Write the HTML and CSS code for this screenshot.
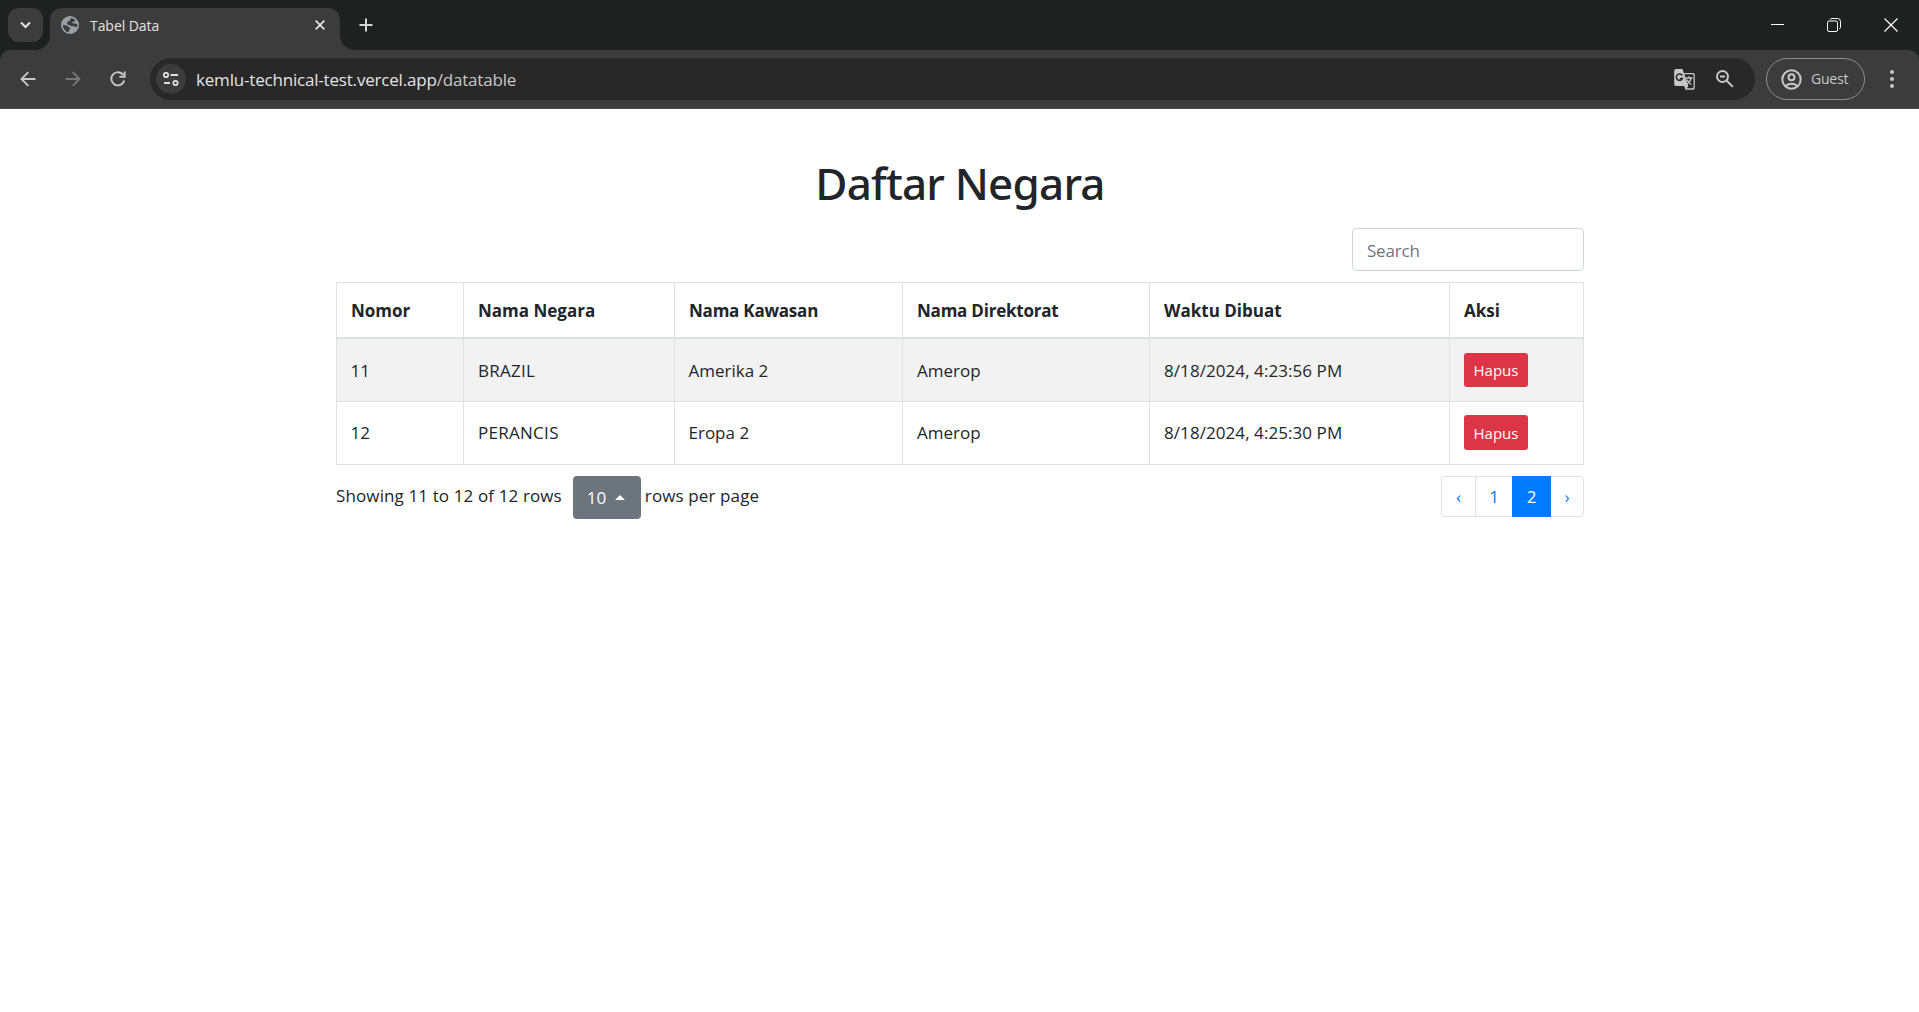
FILE: index.html
```html
<!DOCTYPE html>
<html lang="id">
<head>
<meta charset="utf-8">
<title>Tabel Data</title>
<link rel="stylesheet" href="styles.css">
</head>
<body>
<header class="browser">
  <div class="tabstrip">
    <button class="tab-search" aria-label="Search tabs"><svg width="35" height="34" fill="none" stroke="#e3e3e3" stroke-width="2"><path d="M13 14.500l4.500 4.500 4.500-4.500"/></svg></button>
    <div class="tab">
      <svg class="globe" width="18" height="18" viewBox="0 0 18 18"><circle cx="9" cy="9" r="9" fill="#9aa0a6"/><path d="M10.800 1.900C12 2.300 13.800 3.500 14.600 4.700 13.500 5 13 5.900 11.700 5.800 10.800 6 11 7 12 7.300c1.200.4 3 .2 4.300.9.100 1.200 0 2-.3 2.800-1.800.2-3-.9-4.600-.7C9.800 10.500 9 9 7.200 8.800 6 8.500 5.700 7.600 6.200 6.300 6.700 5 8.500 5.500 9 4.200 9.200 3.200 9.700 2.200 10.800 1.900zM1.800 8.500C3.500 9.800 5 9 6.500 9.900c1.200.7 1 1.600 2.600 1.900.5 1.200-.6 1.700-1.100 2.500-.3.700.1 1.300-.2 2C4.300 15.800 1.800 12.500 1.800 8.500z" fill="#3c3c3c"/></svg>
      <span class="tab-title">Tabel Data</span>
      <svg class="tab-close" width="10" height="10" stroke="#e3e3e3" stroke-width="1.800"><path d="M.7.7l8.600 8.600M9.300.7L.7 9.300"/></svg>
    </div>
    <svg class="new-tab" width="14" height="14" stroke="#d5d5d5" stroke-width="2"><path d="M7 .5v13M.5 7h13"/></svg>
    <div class="window-controls">
      <svg width="13" height="13" stroke="#fff"><path d="M0 6.500h13"/></svg>
      <svg width="14" height="14" fill="none" stroke="#fff"><rect x=".5" y="3" width="10" height="10.500" rx="1.500"/><path d="M3 1.600Q3.500.5 5 .5h5.500q3 0 3 3V9q0 1.500-1.200 2"/></svg>
      <svg width="14" height="14" stroke="#fff" stroke-width="1.200"><path d="M.5.5l13 13M13.500.5l-13 13"/></svg>
    </div>
  </div>
  <div class="toolbar">
    <nav class="nav-icons">
      <svg width="16" height="16" fill="none" stroke="#c7c7c7" stroke-width="1.900"><path d="M15.500 8H1.800M8.300 1.200L1.500 8l6.800 6.800"/></svg>
      <svg width="16" height="16" fill="none" stroke="#777" stroke-width="1.900"><path d="M.5 8h13.700M7.700 1.200L14.500 8l-6.800 6.800"/></svg>
      <svg width="16" height="16" fill="none" stroke="#c7c7c7" stroke-width="1.900"><path d="M13.300 3.900A6.600 6.600 0 1 0 14.300 9.600M14.700.5v5.300H9.400"/></svg>
    </nav>
    <div class="omnibox">
      <span class="site-info"><svg width="16" height="14" fill="none" stroke="#dedede" stroke-width="1.800"><circle cx="3" cy="3" r="2.200"/><path d="M7.500 3H15M1 11h6"/><circle cx="12.500" cy="11" r="2.200"/></svg></span>
      <span class="url">kemlu-technical-test.vercel.app<span class="path">/datatable</span></span>
      <svg class="translate" width="21" height="21" viewBox="0 0 21 21"><path d="M2 0h6.500l1.300 4H19a1.800 1.800 0 0 1 1.800 1.800v13A1.800 1.800 0 0 1 19 20.700h-7.500L10.200 17H2a1.800 1.800 0 0 1-1.800-1.800V1.800A1.800 1.800 0 0 1 2 0z" fill="#c7c7c7"/><path d="M10.300 5.300H18.500q1 0 1 1v12q0 1-1 1h-5.700l1.500-2.200z" fill="#282828"/><path d="M8.300 6.500A3.200 3.200 0 1 0 8.500 9.400H5.800" fill="none" stroke="#282828" stroke-width="1.500"/><path d="M11.500 9h7M15 7.300V9M17.300 9q-.8 3.500-4.500 6M12.800 10.500q1.500 3.200 4.500 5" fill="none" stroke="#c7c7c7" stroke-width="1.300"/></svg>
      <svg class="zoom" width="18" height="18" fill="none" stroke="#c7c7c7" stroke-width="2"><circle cx="6.500" cy="6.500" r="5.500"/><path d="M10.700 10.700l6.200 6.200M4 6.500h5"/></svg>
    </div>
    <button class="guest"><svg width="21" height="21" fill="none" stroke="#c7c7c7" stroke-width="2"><circle cx="10.500" cy="10.500" r="9.200"/><circle cx="10.500" cy="8.300" r="3"/><path d="M4.500 17q6-4.500 12 0"/></svg><span>Guest</span></button>
    <svg class="menu" width="4" height="18" fill="#c7c7c7"><circle cx="2" cy="2" r="2"/><circle cx="2" cy="9" r="2"/><circle cx="2" cy="16" r="2"/></svg>
  </div>
</header>
<main class="container">
  <h1>Daftar Negara</h1>
  <div class="search-row"><input class="search" type="search" placeholder="Search"></div>
  <table class="countries">
    <colgroup><col class="c-no"><col class="c-country"><col class="c-region"><col class="c-dir"><col class="c-time"><col class="c-action"></colgroup>
    <thead><tr><th>Nomor</th><th>Nama Negara</th><th class="tight">Nama Kawasan</th><th class="tight">Nama Direktorat</th><th>Waktu Dibuat</th><th>Aksi</th></tr></thead>
    <tbody>
      <tr><td>11</td><td class="caps">BRAZIL</td><td>Amerika 2</td><td>Amerop</td><td class="time">8/18/2024, 4:23:56 PM</td><td><button class="delete">Hapus</button></td></tr>
      <tr><td>12</td><td class="caps">PERANCIS</td><td>Eropa 2</td><td>Amerop</td><td class="time">8/18/2024, 4:25:30 PM</td><td><button class="delete">Hapus</button></td></tr>
    </tbody>
  </table>
  <footer class="table-footer">
    <span class="info">Showing 11 to 12 of 12 rows</span>
    <button class="page-size">10<i class="caret"></i></button>
    <span class="info">rows per page</span>
    <nav class="pagination"><a class="prev">‹</a><a class="one">1</a><a class="active">2</a><a class="next">›</a></nav>
  </footer>
</main>
</body>
</html>
```
FILE: styles.css
```css
* { box-sizing: border-box; }
body { margin: 0; background: #fff; color: #212529; font: 17px/26px "Open Sans", "Noto Sans", sans-serif; }
button { border: 0; padding: 0; font-family: inherit; color: inherit; }
svg { display: block; flex: none; }

.browser { height: 109px; background: #1f2120; color: #e3e3e3; }
.tabstrip { display: flex; height: 50px; padding: 8px 21px 0 8px; }
.tab-search { width: 35px; height: 34px; border-radius: 11px; background: #3c3c3c; }
.tab { position: relative; display: flex; align-items: center; width: 290px; height: 42px; margin-left: 7px; padding: 0 15px 8px 11px; border-radius: 12px 12px 0 0; background: #3c3c3c; }
.tab::before, .tab::after { content: ""; position: absolute; bottom: 0; width: 14px; height: 14px; }
.tab::before { left: -14px; background: radial-gradient(circle at 0 0, transparent 13.5px, #3c3c3c 14px); }
.tab::after { right: -14px; background: radial-gradient(circle at 100% 0, transparent 13.5px, #3c3c3c 14px); }
.tab-title { margin-left: 11px; padding-top: 2px; font-size: 14px; line-height: 20px; letter-spacing: -.06px; }
.tab-close { margin-left: auto; }
.new-tab { margin: 10px 0 0 18.5px; }
.window-controls { display: flex; gap: 43px; margin: 10px 0 0 auto; }

.toolbar { display: flex; align-items: center; height: 59px; padding: 0 25px 0 20px; border-radius: 10px 10px 0 0; border-bottom: 1px solid #494747; background: #3c3c3c; }
.nav-icons { display: flex; gap: 29px; width: 130px; }
.omnibox { display: flex; align-items: center; width: 1605px; height: 42px; padding: 0 21px 0 6px; border-radius: 21px; background: #282828; }
.site-info { display: grid; place-items: center; width: 30px; height: 30px; border-radius: 50%; background: #3c3c3c; }
.url { margin-left: 10px; padding-top: 2px; letter-spacing: -.19px; }
.path { color: #c7c7c7; }
.translate { margin-left: auto; }
.zoom { margin-left: 21px; }
.guest { display: flex; align-items: center; width: 99px; height: 42px; margin-left: 11px; padding-left: 14px; border: 1px solid #8e8e8e; border-radius: 21px; background: none; color: #c7c7c7; font-size: 14px; letter-spacing: -.2px; }
.guest span { margin-left: 9px; padding-bottom: 2px; }
.menu { margin-left: auto; }

.container { width: 1248px; margin: 0 auto 0 336px; padding-top: 43px; }
h1 { margin: 0 0 14px; font: 500 44px/62px "Noto Sans", "Open Sans", sans-serif; letter-spacing: -.8px; text-align: center; }
.search-row { display: flex; justify-content: flex-end; margin-bottom: 11px; }
.search { width: 232px; height: 43px; padding: 2px 14px 0; border: 1px solid #ced4da; border-radius: 4px; font: inherit; letter-spacing: -.2px; }
.search::placeholder { color: #6c757d; opacity: 1; }

.countries { width: 1248px; table-layout: fixed; border-spacing: 0; }
.c-no { width: 127px; }
.c-country { width: 211px; }
.c-region { width: 228px; }
.c-dir { width: 247px; }
.c-time { width: 300px; }
.c-action { width: 135px; }
th, td { padding: 0 0 0 14px; border-left: 1px solid #dee2e6; border-bottom: 1px solid #dee2e6; text-align: left; }
th:last-child, td:last-child { border-right: 1px solid #dee2e6; }
th { height: 57px; padding-top: 2px; border-top: 1px solid #dee2e6; border-bottom-width: 2px; font-weight: 700; letter-spacing: 0; }
.tight { letter-spacing: -.22px; }
td { height: 63px; padding-left: 13.5px; }
td:nth-child(n+4) { padding-left: 14px; }
tbody tr:first-child { background: #f2f2f2; }
tbody tr:first-child td:not(:last-child) { padding-top: 2px; }
.caps { padding-left: 14px; letter-spacing: .28px; }
.time { letter-spacing: .07px; }
.delete { display: block; width: 64px; height: 34px; border-radius: 3px; background: #dc3545; color: #fff; font-size: 15px; }
tbody tr:last-child .delete { height: 35px; margin-top: -1px; }

.table-footer { display: flex; align-items: flex-start; margin-top: 11px; }
.info { margin-top: 7px; letter-spacing: .12px; }
.page-size { display: flex; align-items: center; width: 68px; height: 43px; margin: 0 4px 0 11px; padding-left: 14px; border-radius: 4px; background: #6c757d; color: #fff; font-size: 17px; }
.caret { margin-left: 9px; border: 5px solid transparent; border-top: 0; border-bottom-color: #fff; }
.pagination { display: flex; width: 143px; height: 41px; margin-left: auto; border: 1px solid #dee2e6; border-radius: 4px; color: #007bff; line-height: 40px; text-align: center; }
.prev { width: 34px; border-right: 1px solid #dee2e6; }
.one { width: 36px; }
.active { width: 39px; height: 41px; margin-top: -1px; background: #007bff; color: #fff; line-height: 42px; }
.next { flex: 1; }
```
